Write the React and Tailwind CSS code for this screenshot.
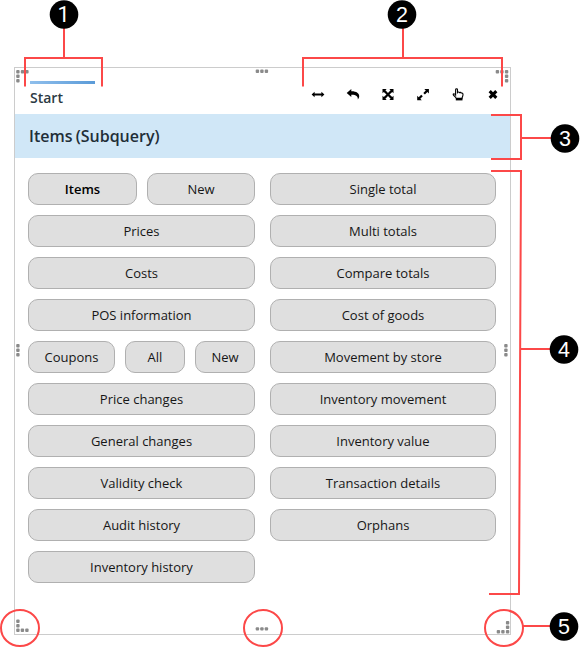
import React from "react";

const leftRows = [
  [{ label: "Items", width: "w-[109px]", bold: true }, { label: "New", width: "w-[108px]" }],
  [{ label: "Prices", width: "w-full" }],
  [{ label: "Costs", width: "w-full" }],
  [{ label: "POS information", width: "w-full" }],
  [
    { label: "Coupons", width: "w-[87px]" },
    { label: "All", width: "w-[60px]" },
    { label: "New", width: "w-[60px]" },
  ],
  [{ label: "Price changes", width: "w-full" }],
  [{ label: "General changes", width: "w-full" }],
  [{ label: "Validity check", width: "w-full" }],
  [{ label: "Audit history", width: "w-full" }],
  [{ label: "Inventory history", width: "w-full" }],
];

const rightRows = [
  "Single total",
  "Multi totals",
  "Compare totals",
  "Cost of goods",
  "Movement by store",
  "Inventory movement",
  "Inventory value",
  "Transaction details",
  "Orphans",
];

function Pill({ label, width, bold }) {
  return (
    <button
      className={`h-8 shrink-0 rounded-[10px] border border-[#b0b0b0] bg-[#dfdfdf] text-center text-[13px] leading-[30px] whitespace-nowrap ${width} ${bold ? "font-semibold text-black" : "text-[#161616]"}`}
    >
      {label}
    </button>
  );
}

function Icon({ children }) {
  return (
    <svg width="14" height="14" viewBox="0 0 14 14" fill="black" className="shrink-0">
      {children}
    </svg>
  );
}

function Toolbar() {
  return (
    <div className="flex gap-[21px] pt-[19px]">
      <Icon>
        <path d="M0.6 7.5 3.6 4.7V6.6H10.4V4.7L13.4 7.5 10.4 10.3V8.4H3.6V10.3Z" />
      </Icon>
      <Icon>
        <path d="M0.7 5.9 5.3 1.9V4.3C10.5 4.2 13.3 6.5 13.2 9.3 13.2 10.5 12.6 11.7 11.8 12.6 12.2 9.2 10 7.6 5.3 7.7V9.9Z" />
      </Icon>
      <Icon>
        <path d="M1.5 2H5.7L4.4 3.3 7 6 9.6 3.3 8.3 2H12.5V6.2L11.2 4.9 8.5 7.5 11.2 10.1 12.5 8.8V13H8.3L9.6 11.7 7 9 4.4 11.7 5.7 13H1.5V8.8L2.8 10.1 5.5 7.5 2.8 4.9 1.5 6.2Z" />
      </Icon>
      <Icon>
        <path d="M8.3 2H12.9V6.6L11.4 5.1 8.9 7.6 7.3 6 9.8 3.5ZM1.2 8.7 2.7 10.2 5.2 7.7 6.8 9.3 4.3 11.8 5.8 13.3H1.2Z" />
      </Icon>
      <Icon>
        <path
          d="M4.6 8V2.7C4.6 1.5 6.5 1.5 6.5 2.7V5.5C7 4.8 8 4.8 8.4 5.6 9.1 5.1 9.9 5.4 10.2 6.1 11.2 5.7 12 6.3 12 7.3 12 9.3 11.2 10 11 11.3H5.3C4.6 9.8 3.2 9.2 2.3 7.9 1.8 6.6 3.4 6 4.6 8Z"
          fill="white"
          stroke="black"
          strokeWidth="1.1"
        />
        <path d="M4.8 11H11.5V13.4H4.8Z" />
      </Icon>
      <Icon>
        <path d="M4.8 3.1 7 5.3 9.2 3.1 11.4 5.3 9.2 7.5 11.4 9.7 9.2 11.9 7 9.7 4.8 11.9 2.6 9.7 4.8 7.5 2.6 5.3Z" />
      </Icon>
    </div>
  );
}

// Resize grips: each entry is the top-left corner of one dot.
const grips = [
  [16, 70], [20.6, 70], [25, 70], [16, 74.5], [16, 79],
  [255.5, 69.5], [260, 69.5], [264.5, 69.5],
  [495.5, 70], [500, 70], [504.7, 70], [504.7, 74.5], [504.7, 79],
  [16, 344], [16, 348.5], [16, 353],
  [504, 344], [504, 348.5], [504, 353],
  [16, 619.5], [16, 624], [16, 628.5], [20.5, 628.5], [25, 628.5],
  [255.5, 627.2], [260, 627.2], [264.5, 627.2],
  [505.7, 621], [505.7, 625.5], [505.7, 630], [501, 630], [496.5, 630],
];

const markers = [
  { n: "1", x: 63.5, y: 14.5, family: "Roboto, sans-serif" },
  { n: "2", x: 402, y: 14.5, family: "Liberation Sans, sans-serif" },
  { n: "3", x: 565, y: 138.5, family: "Liberation Sans, sans-serif" },
  { n: "4", x: 564, y: 349.5, family: "Liberation Sans, sans-serif" },
  { n: "5", x: 564, y: 626.5, family: "Liberation Sans, sans-serif" },
];

function Callouts() {
  return (
    <svg className="pointer-events-none absolute top-0 left-0" width="580" height="647" viewBox="0 0 580 647">
      {grips.map(([x, y]) => (
        <rect key={`${x}-${y}`} x={x + 0.2} y={y} width="3.4" height="3.4" rx="1" fill="#8a8a8a" />
      ))}
      <g fill="none" stroke="#fc4848" strokeWidth="2">
        <path d="M64 28V58M25 86.5V58H102V86.5" />
        <path d="M403 28V58M303 86.5V58H502V86.5" />
        <path d="M491 115H521V159H491M521 138H552" />
        <path d="M491 171H521L519 594H489M520 349H551" />
        <path d="M523 626H551" />
        <ellipse cx="20" cy="628" rx="19" ry="18" />
        <ellipse cx="263" cy="628" rx="19" ry="18" />
        <ellipse cx="504" cy="628" rx="19" ry="18" />
      </g>
      {markers.map((m) => (
        <g key={m.n}>
          <circle cx={m.x + (m.n === "1" ? 0.5 : 0)} cy={m.y} r="14.3" fill="black" />
          <text x={m.x} y={m.y + 7.5} textAnchor="middle" fontSize="21.5" fontFamily={m.family} fill="white">
            {m.n}
          </text>
        </g>
      ))}
    </svg>
  );
}

export default function App() {
  return (
    <div className="relative h-[647px] w-[580px] overflow-hidden bg-white pt-[67px] pl-[14px] font-['Open_Sans',sans-serif]">
      <div className="h-[568px] w-[497px] border border-[#cccccc] bg-white">
        <div className="flex h-[46px] justify-between pr-[10px] pl-[15px]">
          <div className="w-[65px] pt-[13px]">
            <div className="h-[3px] bg-linear-to-r from-[#8fbfec] to-[#5b9bd8]" />
            <div className="pt-[3.5px] text-sm leading-5 font-semibold text-[#2c3a43]">Start</div>
          </div>
          <Toolbar />
        </div>
        <div className="h-11 bg-[#d0e7f7] pl-[14px] text-base leading-[45px] font-semibold text-[#1f2e37] [word-spacing:-1px]">
          Items (Subquery)
        </div>
        <div className="flex gap-[15px] pt-[15px] pl-[13px]">
          <div className="flex w-[227px] flex-col gap-[10px]">
            {leftRows.map((row, i) => (
              <div key={i} className="flex gap-[10px]">
                {row.map((b) => (
                  <Pill key={b.label} {...b} />
                ))}
              </div>
            ))}
          </div>
          <div className="flex w-[226px] flex-col gap-[10px]">
            {rightRows.map((label) => (
              <Pill key={label} label={label} width="w-full" />
            ))}
          </div>
        </div>
      </div>
      <Callouts />
    </div>
  );
}
